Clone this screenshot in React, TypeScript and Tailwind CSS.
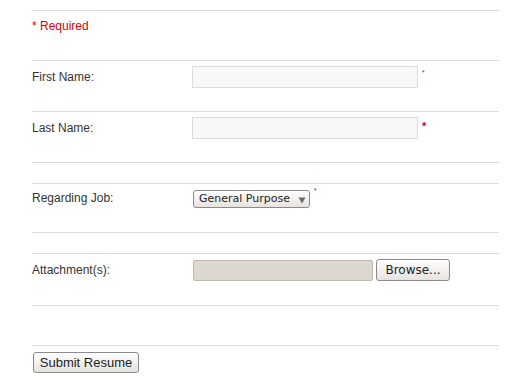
import React from "react";

const btn =
  "border border-[#8a8a8a] rounded-[3px] bg-gradient-to-b from-[#ffffff] to-[#e6e3df] text-[#222] flex items-center justify-center";

export default function App() {
  return (
    <div className="w-[521px] h-[382px] bg-white pl-[32px] pt-[10px] font-['Liberation_Sans',Arial,sans-serif] text-[12px] text-[#333]">
      <div className="w-[467px]">
        {/* Required */}
        <div className="border-t border-[#dddddd] h-[50px] pt-[8px]">
          <span className="text-[#dd0000] leading-[14px] block">* Required</span>
        </div>
        {/* First Name */}
        <div className="border-t border-[#dddddd] h-[51px] flex items-start">
          <div className="w-[160px] pt-[9px] leading-[14px]">First Name:</div>
          <div className="mt-[5px] w-[226px] h-[22px] border border-[#dcdcdc] bg-[#f8f8f8]" />
          <span className="text-[#dd0000] text-[7px] leading-[7px] ml-[4px] mt-[8px]">*</span>
        </div>
        {/* Last Name */}
        <div className="border-t border-[#dddddd] h-[51px] flex items-start">
          <div className="w-[160px] pt-[9px] leading-[14px]">Last Name:</div>
          <div className="mt-[5px] w-[226px] h-[22px] border border-[#dcdcdc] bg-[#f8f8f8]" />
          <span className="text-[#dd0000] text-[11px] leading-[11px] font-bold ml-[4px] mt-[9px]">*</span>
        </div>
        <div className="border-t border-[#dddddd] h-[21px]" />
        {/* Regarding Job */}
        <div className="border-t border-[#dddddd] h-[49px] flex items-start">
          <div className="w-[161px] pt-[7px] leading-[14px]">Regarding Job:</div>
          <div className={`${btn} mt-[6px] w-[117px] h-[18px] rounded-[2px] justify-start pl-[5px] font-['DejaVu_Sans',sans-serif] text-[11px]`}>
            <span className="leading-[12px]">General Purpose</span>
            <svg width="8" height="8" viewBox="0 0 8 8" className="ml-[8px] mt-[1px]">
              <path d="M0.5 1.5 L7.5 1.5 L4 7.5 Z" fill="#6a6a6a" />
            </svg>
          </div>
          <span className="text-[#dd0000] text-[7px] leading-[7px] ml-[4px] mt-[3px]">*</span>
        </div>
        <div className="border-t border-[#dddddd] h-[21px]" />
        {/* Attachment */}
        <div className="border-t border-[#dddddd] h-[52px] flex items-start">
          <div className="w-[161px] pt-[9px] leading-[14px]">Attachment(s):</div>
          <div className="mt-[6px] w-[180px] h-[21px] border border-[#bdb9b1] rounded-[2px] bg-[#dcd8d0]" />
          <div className={`${btn} mt-[5px] ml-[3px] w-[74px] h-[22px] font-['DejaVu_Sans',sans-serif] text-[12px]`}>
            Browse...
          </div>
        </div>
        <div className="border-t border-[#dddddd] h-[40px]" />
        <div className="border-t border-[#dddddd] pt-[6px]">
          <div className={`${btn} ml-[1px] w-[106px] h-[21px] text-[13px]`}>Submit Resume</div>
        </div>
      </div>
    </div>
  );
}
